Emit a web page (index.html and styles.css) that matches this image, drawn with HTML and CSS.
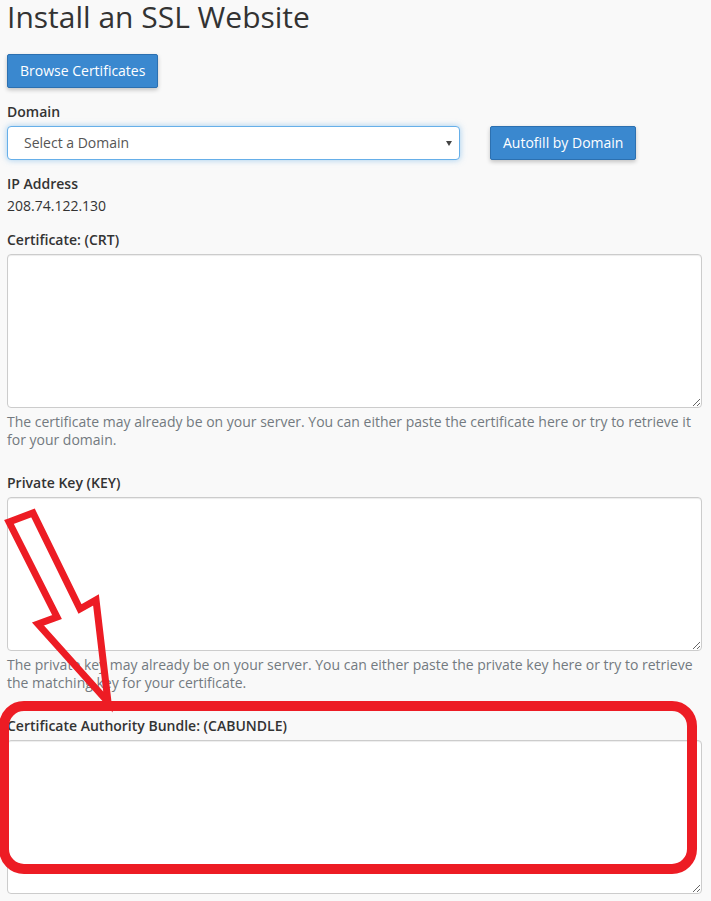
FILE: index.html
```html
<!DOCTYPE html>
<html lang="en">
<head>
<meta charset="utf-8">
<title>Install an SSL Website</title>
<link rel="stylesheet" href="styles.css">
</head>
<body>
<div class="page">
  <h1 class="title">Install an SSL Website</h1>
  <div class="toolbar">
    <button class="btn" type="button">Browse Certificates</button>
  </div>

  <div class="group">
    <label class="label">Domain</label>
    <div class="domain-row">
      <div class="select"><span class="select-text">Select a Domain</span><span class="caret"></span></div>
      <button class="btn" type="button">Autofill by Domain</button>
    </div>
  </div>

  <div class="group">
    <div class="label label-tight">IP Address</div>
    <div class="value">208.74.122.130</div>
  </div>

  <div class="group">
    <label class="label">Certificate: (CRT)</label>
    <textarea class="area"></textarea>
    <p class="help">The certificate may already be on your server. You can either paste the certificate here or try to retrieve it for your domain.</p>
  </div>

  <div class="group">
    <label class="label">Private Key (KEY)</label>
    <textarea class="area"></textarea>
    <p class="help">The private key may already be on your server. You can either paste the private key here or try to retrieve the matching key for your certificate.</p>
  </div>

  <div class="group">
    <label class="label">Certificate Authority Bundle: (CABUNDLE)</label>
    <textarea class="area"></textarea>
  </div>
</div>

<svg class="annotation" width="711" height="901" viewBox="0 0 711 901" aria-hidden="true">
  <polygon class="ann-arrow" points="9,522 33,513 80,609 96,600 108,702 38,624 57,617"/>
  <rect class="ann-box" x="4" y="706" width="688" height="163" rx="20" ry="20"/>
</svg>
</body>
</html>
```

FILE: styles.css
```css
html {
  overflow: hidden;
}

body {
  margin: 0;
  background: #f9f9f9;
  color: #333;
  font-family: "Open Sans", "DejaVu Sans", sans-serif;
  font-size: 14px;
  line-height: 20px;
  position: relative;
}

.page {
  display: flex;
  flex-direction: column;
  padding: 0 9px 0 7px;
}

.title {
  margin: 0 0 21px;
  font-size: 30px;
  line-height: 33px;
  font-weight: 400;
  color: #333;
}

.toolbar {
  display: flex;
}

.btn {
  font-family: inherit;
  font-size: 14px;
  line-height: 20px;
  padding: 6px 12px;
  color: #fff;
  background: #3a88cf;
  border: 1px solid #2c70b0;
  border-radius: 2px;
  box-shadow: 0 2px 4px rgba(0, 0, 0, 0.22);
  cursor: pointer;
}

.group {
  display: flex;
  flex-direction: column;
  margin-top: 14px;
}

.label {
  font-weight: 600;
  margin-bottom: 4px;
}

.label-tight {
  margin-bottom: 0;
}

.value {
  margin-top: 2px;
}

.domain-row {
  display: flex;
  align-items: flex-start;
  gap: 30px;
}

.select {
  box-sizing: border-box;
  width: 453px;
  height: 34px;
  display: flex;
  align-items: center;
  justify-content: space-between;
  padding: 0 7px 0 16px;
  background: #fff;
  border: 1px solid #66afe9;
  border-radius: 4px;
  box-shadow: 0 0 6px rgba(102, 175, 233, 0.6);
  color: #555;
}

.caret {
  width: 0;
  height: 0;
  border-left: 3.5px solid transparent;
  border-right: 3.5px solid transparent;
  border-top: 5px solid #444;
}

.area {
  display: block;
  box-sizing: border-box;
  width: 100%;
  height: 154px;
  margin: 0;
  background: #fff;
  border: 1px solid #ccc;
  border-radius: 4px;
  box-shadow: inset 0 1px 1px rgba(0, 0, 0, 0.075);
  resize: vertical;
  font-family: inherit;
  font-size: 14px;
}

.help {
  margin: 5px 0 10px;
  font-size: 14px;
  line-height: 18px;
  color: #737a80;
}

.annotation {
  position: absolute;
  left: 0;
  top: 0;
  pointer-events: none;
}

.ann-arrow {
  fill: none;
  stroke: #ed1c24;
  stroke-width: 7;
  stroke-linejoin: miter;
  stroke-miterlimit: 10;
}

.ann-box {
  fill: none;
  stroke: #ed1c24;
  stroke-width: 10;
}
```
